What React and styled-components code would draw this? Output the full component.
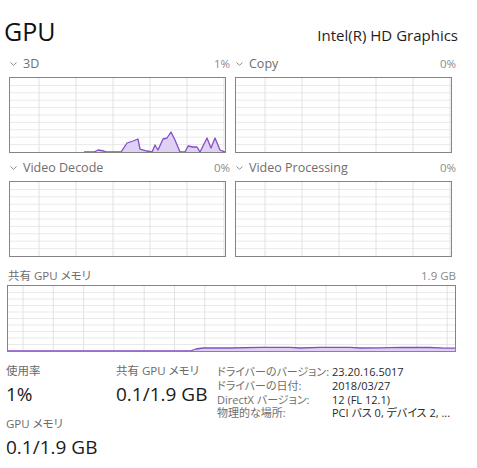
import React from 'react'
import styled, { createGlobalStyle } from 'styled-components'

const GlobalStyle = createGlobalStyle`
  html, body {
    margin: 0;
    padding: 0;
    background: #fff;
  }
  body {
    font-family: 'Open Sans', 'Noto Sans CJK JP', sans-serif;
    font-feature-settings: 'palt';
    color: #1a1a1a;
  }
`

const Page = styled.div`
  width: 477px;
  height: 468px;
  box-sizing: border-box;
  padding-top: 14px;
  overflow: hidden;
`

const Header = styled.div`
  display: flex;
  justify-content: space-between;
  align-items: baseline;
  padding: 0 19px 0 4px;
`

const Title = styled.div`
  font-size: 25px;
  line-height: 34px;
  color: #111;
`

const Adapter = styled.div`
  font-size: 15px;
  color: #1e1e1e;
`

const EngineGrid = styled.div`
  display: grid;
  grid-template-columns: 221px 221px;
  column-gap: 5px;
  row-gap: 5px;
  margin: 6px 0 0 9px;
`

const Cell = styled.div`
  display: flex;
  flex-direction: column;
`

const LabelRow = styled.div`
  display: flex;
  justify-content: space-between;
  align-items: center;
  box-sizing: border-box;
  height: ${(p) => p.$height || 22}px;
  padding-bottom: ${(p) => p.$lift ?? 3}px;
  margin-bottom: 1px;
  font-size: ${(p) => p.$size || 12.5}px;
  color: #6e6e6e;
`

const LabelName = styled.span`
  display: flex;
  align-items: center;
  gap: 6px;
  padding-left: ${(p) => p.$indent || 0}px;
`

const Percent = styled.span`
  color: #8a8a8a;
  font-size: 11.5px;
`

const GraphBox = styled.div`
  width: ${(p) => p.$w}px;
  height: ${(p) => p.$h}px;
  box-sizing: border-box;
  border: 1px solid #858585;
  background: #fff;

  svg {
    display: block;
  }
`

const SharedSection = styled.div`
  margin: 9px 0 0 7px;
  width: 449px;
`

const Stats = styled.div`
  display: grid;
  grid-template-columns: 110px 101px 1fr;
  align-items: start;
  margin: 11px 0 0 6px;
`

const StatColumn = styled.div`
  display: flex;
  flex-direction: column;
`

const StatLabel = styled.div`
  font-size: 11.5px;
  line-height: 16px;
  color: #6b6b6b;
`

const StatValue = styled.div`
  font-size: 19px;
  line-height: 30px;
  color: #1a1a1a;
  margin-bottom: ${(p) => p.$gap || 0}px;
`

const Details = styled.div`
  display: grid;
  grid-template-columns: 115px 1fr;
  align-content: start;
  font-size: 11px;
  line-height: 13.8px;
  padding-top: 2px;
`

const DetailKey = styled.div`
  color: #6e6e6e;
`

const DetailValue = styled.div`
  color: #2a2a2a;
`

const Chevron = () => (
  <svg width="7" height="4" viewBox="0 0 7 4">
    <polyline points="0.5,0.5 3.5,3.3 6.5,0.5" fill="none" stroke="#8a8a8a" strokeWidth="1" />
  </svg>
)

const Graph = ({ w, h, cols, colOffset, points }) => {
  const iw = w - 2
  const ih = h - 2
  const rows = []
  for (let i = 1; i < 10; i++) rows.push((ih / 10) * i)
  const verts = []
  for (let x = colOffset; x < iw; x += cols) verts.push(x)
  let area = null
  let line = null
  if (points) {
    const pts = points.map(([x, y]) => `${x},${y}`).join(' ')
    line = pts
    area = `${points[0][0]},${ih} ${pts} ${points[points.length - 1][0]},${ih}`
  }
  return (
    <GraphBox $w={w} $h={h}>
      <svg width={iw} height={ih} viewBox={`0 0 ${iw} ${ih}`}>
        {rows.map((y) => (
          <line key={'r' + y} x1="0" x2={iw} y1={y} y2={y} stroke="#e9e9e9" strokeWidth="1" />
        ))}
        {verts.map((x) => (
          <line key={'c' + x} x1={x} x2={x} y1="0" y2={ih} stroke="#e2e2e2" strokeWidth="1" />
        ))}
        {area && <polygon points={area} fill="#dfd0f4" />}
        {line && (
          <polyline points={line} fill="none" stroke="#8250c4" strokeWidth="1.3" strokeLinejoin="round" />
        )}
      </svg>
    </GraphBox>
  )
}

// points in page coords, shifted into the 3D graph's inner box
const raw3d = [
  [84, 152], [94, 152], [98, 150], [101, 150.5], [104, 151], [107, 152], [121, 152],
  [127, 143], [133, 141], [138, 139], [140, 149], [147, 151], [152, 152], [155, 145],
  [158, 150], [163, 139], [167, 138], [171, 132], [175, 140], [180, 152], [185, 152],
  [188, 146], [193, 147], [197, 147], [200, 152], [207, 138], [211, 148], [215, 138],
  [220, 150], [225, 152],
]
const points3d = raw3d.map(([x, y]) => [x - 10, Math.min(y - 78, 74)])

const rawShared = [
  [8, 351], [190, 351], [196, 349], [203, 348], [230, 348], [260, 347.4], [290, 347.4],
  [300, 348], [320, 347.4], [350, 347.4], [360, 348], [380, 347.8], [400, 347.4],
  [430, 347.5], [445, 348.2], [455, 348.2],
]
const pointsShared = rawShared.map(([x, y]) => [x - 8, Math.min(y - 286, 65)])

const engines = [
  { name: '3D', value: '1%', points: points3d },
  { name: 'Copy', value: '0%' },
  { name: 'Video Decode', value: '0%' },
  { name: 'Video Processing', value: '0%' },
]

const details = [
  ['ドライバーのバージョン:', '23.20.16.5017'],
  ['ドライバーの日付:', '2018/03/27'],
  ['DirectX バージョン:', '12 (FL 12.1)'],
  ['物理的な場所:', 'PCI バス 0, デバイス 2, ...'],
]

export default function App() {
  return (
    <Page>
      <GlobalStyle />
      <Header>
        <Title>GPU</Title>
        <Adapter>Intel(R) HD Graphics</Adapter>
      </Header>

      <EngineGrid>
        {engines.map((e) => (
          <Cell key={e.name}>
            <LabelRow>
              <LabelName $indent={1}>
                <Chevron />
                {e.name}
              </LabelName>
              <Percent>{e.value}</Percent>
            </LabelRow>
            <Graph w={217} h={76} cols={37} colOffset={29} points={e.points} />
          </Cell>
        ))}
      </EngineGrid>

      <SharedSection>
        <LabelRow $height={18} $lift={0} $size={11.5}>
          <LabelName $indent={1}>共有 GPU メモリ</LabelName>
          <Percent>1.9 GB</Percent>
        </LabelRow>
        <Graph w={449} h={67} cols={30.3} colOffset={15} points={pointsShared} />
      </SharedSection>

      <Stats>
        <StatColumn>
          <StatLabel>使用率</StatLabel>
          <StatValue $gap={7}>1%</StatValue>
          <StatLabel>GPU メモリ</StatLabel>
          <StatValue>0.1/1.9 GB</StatValue>
        </StatColumn>
        <StatColumn>
          <StatLabel>共有 GPU メモリ</StatLabel>
          <StatValue>0.1/1.9 GB</StatValue>
        </StatColumn>
        <Details>
          {details.map(([k, v]) => (
            <React.Fragment key={k}>
              <DetailKey>{k}</DetailKey>
              <DetailValue>{v}</DetailValue>
            </React.Fragment>
          ))}
        </Details>
      </Stats>
    </Page>
  )
}
